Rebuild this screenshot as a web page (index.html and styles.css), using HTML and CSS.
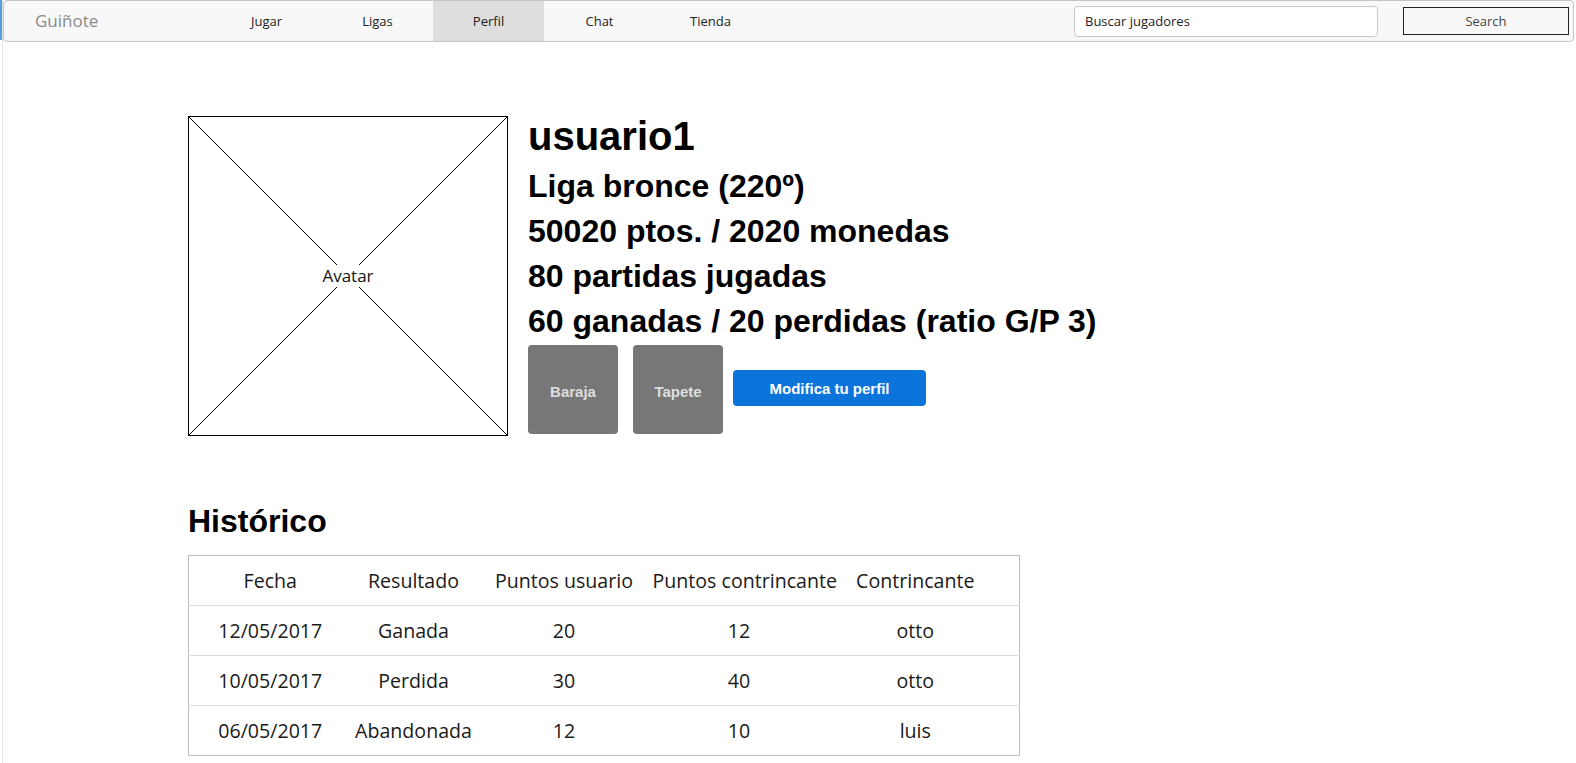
FILE: index.html
```html
<!DOCTYPE html>
<html lang="es">
<head>
<meta charset="utf-8">
<title>Guiñote - Perfil</title>
<link rel="stylesheet" href="styles.css">
</head>
<body>
<div class="page">
  <nav class="navbar">
    <div class="brand">Guiñote</div>
    <a class="nav-link">Jugar</a>
    <a class="nav-link">Ligas</a>
    <a class="nav-link active">Perfil</a>
    <a class="nav-link">Chat</a>
    <a class="nav-link">Tienda</a>
    <div class="spacer"></div>
    <div class="search-input">Buscar jugadores</div>
    <div class="search-btn">Search</div>
  </nav>

  <main class="main">
    <section class="profile">
      <div class="avatar">
        <svg class="avatar-x" viewBox="0 0 318 318" preserveAspectRatio="none">
          <line x1="0" y1="0" x2="318" y2="318" stroke="#000" stroke-width="1"/>
          <line x1="318" y1="0" x2="0" y2="318" stroke="#000" stroke-width="1"/>
        </svg>
        <span class="avatar-label">Avatar</span>
      </div>
      <div class="info">
        <div class="username">usuario1</div>
        <div class="stat">Liga bronce (220º)</div>
        <div class="stat">50020 ptos. / 2020 monedas</div>
        <div class="stat">80 partidas jugadas</div>
        <div class="stat">60 ganadas / 20 perdidas (ratio G/P 3)</div>
        <div class="actions">
          <div class="tile">Baraja</div>
          <div class="tile">Tapete</div>
          <div class="primary-btn">Modifica tu perfil</div>
        </div>
      </div>
    </section>

    <section class="history">
      <h2 class="history-title">Histórico</h2>
      <table class="history-table">
        <colgroup>
          <col class="c1"><col class="c2"><col class="c3"><col class="c4"><col class="c5">
        </colgroup>
        <thead>
          <tr><th>Fecha</th><th>Resultado</th><th>Puntos usuario</th><th>Puntos contrincante</th><th class="last">Contrincante</th></tr>
        </thead>
        <tbody>
          <tr><td>12/05/2017</td><td>Ganada</td><td>20</td><td>12</td><td class="last">otto</td></tr>
          <tr><td>10/05/2017</td><td>Perdida</td><td>30</td><td>40</td><td class="last">otto</td></tr>
          <tr><td>06/05/2017</td><td>Abandonada</td><td>12</td><td>10</td><td class="last">luis</td></tr>
        </tbody>
      </table>
    </section>
  </main>
</div>
</body>
</html>
```

FILE: styles.css
```css
html, body {
  margin: 0;
  padding: 0;
}

body {
  background: #fff linear-gradient(to right, #5b9ee0 2px, transparent 2px) no-repeat;
  background-size: 2px 40px;
  font-family: "Open Sans", "Liberation Sans", sans-serif;
  color: #222;
}

.page {
  margin-left: 2px;
  border-left: 1px solid #e4e4e4;
  min-height: 763px;
  box-sizing: border-box;
}

.navbar {
  display: flex;
  align-items: center;
  height: 42px;
  box-sizing: border-box;
  margin-right: 2px;
  border: 1px solid #c6c6c6;
  border-radius: 4px;
  background: #f8f8f8;
  padding-left: 31px;
  padding-right: 4px;
}

.brand {
  width: 176px;
  font-size: 17px;
  color: #8a8a8a;
  line-height: 40px;
}

.nav-link {
  width: 111px;
  text-align: center;
  font-size: 13px;
  line-height: 40px;
  color: #222;
  align-self: stretch;
}

.nav-link.active {
  background: #dedede;
}

.spacer {
  flex: 1;
}

.search-input {
  width: 304px;
  height: 31px;
  box-sizing: border-box;
  border: 1px solid #c8c8c8;
  border-radius: 4px;
  background: #fff;
  padding-left: 10px;
  font-size: 13px;
  line-height: 29px;
  color: #222;
  margin-right: 25px;
}

.search-btn {
  width: 166px;
  height: 28px;
  box-sizing: border-box;
  border: 1px solid #222;
  background: #f8f8f8;
  text-align: center;
  font-size: 13px;
  line-height: 26px;
  color: #444;
}

.main {
  padding: 74px 0 0 185px;
}

.profile {
  display: flex;
  align-items: flex-start;
  gap: 20px;
}

.avatar {
  position: relative;
  width: 320px;
  height: 320px;
  box-sizing: border-box;
  border: 1px solid #000;
  display: flex;
  align-items: center;
  justify-content: center;
}

.avatar-x {
  position: absolute;
  inset: 0;
  width: 100%;
  height: 100%;
}

.avatar-label {
  position: relative;
  background: #fff;
  font-size: 17px;
  line-height: 22px;
  padding: 0 1px;
  color: #111;
}

.info {
  display: flex;
  flex-direction: column;
  font-family: "Liberation Sans", Arial, sans-serif;
  font-weight: bold;
  color: #000;
}

.username {
  font-size: 40px;
  line-height: 40px;
  margin-bottom: 10.2px;
}

.stat {
  font-size: 32px;
  line-height: 40px;
  margin-bottom: 5.1px;
}

.actions {
  display: flex;
  align-items: center;
  margin-top: -2px;
}

.tile {
  width: 90px;
  height: 89px;
  border-radius: 4px;
  background: #777;
  color: #dedede;
  font-size: 15px;
  display: flex;
  align-items: center;
  justify-content: center;
  padding-top: 4px;
  box-sizing: border-box;
  margin-right: 15px;
}

.tile + .tile {
  margin-right: 10px;
}

.primary-btn {
  width: 193px;
  height: 36px;
  border-radius: 4px;
  background: #0a74da;
  color: #fff;
  font-size: 15px;
  display: flex;
  align-items: center;
  justify-content: center;
  margin-top: -2px;
}

.history {
  margin-top: 67px;
}

.history-title {
  margin: 0 0 15px;
  font-family: "Liberation Sans", Arial, sans-serif;
  font-weight: bold;
  font-size: 32px;
  line-height: 37px;
  color: #000;
}

.history-table {
  width: 831px;
  border-collapse: collapse;
  border: 1px solid #bdbdbd;
  table-layout: fixed;
  font-size: 19.6px;
  color: #1a1a1a;
}

.history-table col.c1 { width: 163px; }
.history-table col.c2 { width: 124px; }
.history-table col.c3 { width: 177px; }
.history-table col.c4 { width: 173px; }
.history-table col.c5 { width: 194px; }

.history-table th,
.history-table td {
  height: 49px;
  padding: 0;
  text-align: center;
  font-weight: normal;
  white-space: nowrap;
}

.history-table .last {
  padding-right: 14px;
}

.history-table tbody tr td {
  border-top: 1px solid #dcdcdc;
}
```
